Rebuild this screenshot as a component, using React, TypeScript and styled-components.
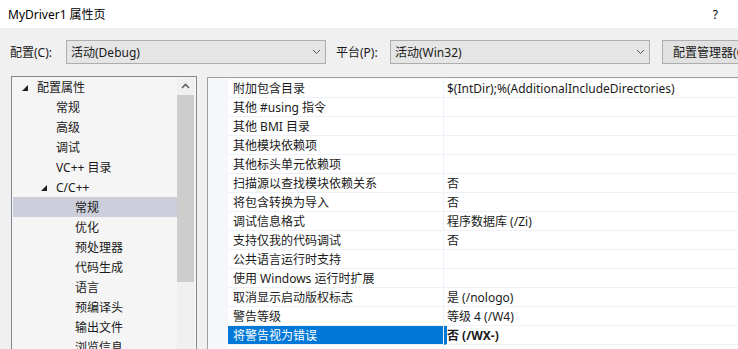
import React from "react";
import styled, { createGlobalStyle } from "styled-components";

const GlobalStyle = createGlobalStyle`
  html, body {
    margin: 0;
    padding: 0;
    overflow: hidden;
    background: #f0f0f0;
  }
  * { box-sizing: border-box; }
`;

const FONT = `"Noto Sans", "Noto Sans CJK SC", sans-serif`;

const Window = styled.div`
  width: 738px;
  height: 349px;
  display: flex;
  flex-direction: column;
  background: #f0f0f0;
  font-family: ${FONT};
  font-size: 12px;
  color: #1a1a1a;
  overflow: hidden;
`;

const TitleBar = styled.div`
  height: 28px;
  flex: none;
  display: flex;
  align-items: center;
  justify-content: space-between;
  background: #ffffff;
  padding: 0 20px 0 8px;
  color: #000;
`;

const Toolbar = styled.div`
  flex: none;
  display: flex;
  align-items: center;
  height: 24px;
  margin-top: 12px;
  padding-left: 10px;
`;

const Label = styled.span<{ width: number }>`
  width: ${p => p.width}px;
  flex: none;
  white-space: nowrap;
`;

const Combo = styled.div`
  width: 260px;
  height: 24px;
  flex: none;
  display: flex;
  align-items: center;
  justify-content: space-between;
  background: #e5e5e5;
  border: 1px solid #adadad;
  padding: 0 4px 0 4px;
  margin-right: 10px;
`;

const Button = styled.div`
  height: 24px;
  flex: none;
  display: flex;
  align-items: center;
  background: #e1e1e1;
  border: 1px solid #adadad;
  padding: 0 10px;
  margin-left: 2px;
  white-space: nowrap;
`;

const Panels = styled.div`
  flex: 1;
  display: flex;
  gap: 10px;
  margin-top: 12px;
  padding-left: 11px;
  min-height: 0;
`;

const TreePanel = styled.div`
  width: 186px;
  flex: none;
  display: flex;
  border: 1px solid #828790;
  border-bottom: none;
  background: #f5f5f5;
  padding: 0 1px 0 1px;
`;

const TreeList = styled.div`
  flex: 1;
`;

const TreeRow = styled.div<{ level: number; selected?: boolean }>`
  height: 20px;
  display: flex;
  align-items: center;
  padding-left: ${p => 24 + p.level * 19}px;
  background: ${p => (p.selected ? "#cccedb" : "transparent")};
  position: relative;
  white-space: nowrap;
`;

const Expander = styled.svg<{ level: number }>`
  position: absolute;
  left: ${p => 9 + p.level * 19}px;
  top: 8px;
`;

const ScrollBar = styled.div`
  width: 17px;
  flex: none;
  display: flex;
  flex-direction: column;
  background: #f0f0f0;
  margin-right: 1px;
`;

const ScrollArrow = styled.div`
  height: 18px;
  display: flex;
  align-items: center;
  justify-content: center;
`;

const ScrollThumb = styled.div`
  height: 187px;
  background: #cdcdcd;
`;

const GridPanel = styled.div`
  flex: 1;
  border: 1px solid #a0a0a0;
  border-right: none;
  border-bottom: none;
  margin-top: 1px;
  background: #f5f7fb;
  padding-top: 1px;
`;

const GridRow = styled.div`
  height: 19px;
  display: grid;
  grid-template-columns: 20px 216px 1fr;
`;

const Margin = styled.div`
  background: #f5f7fb;
`;

const NameCell = styled.div<{ selected?: boolean }>`
  display: flex;
  align-items: center;
  padding-left: 5px;
  white-space: nowrap;
  border-bottom: 1px solid #eef1f7;
  border-right: 1px solid #eef1f7;
  background: ${p => (p.selected ? "#0078d7" : "#ffffff")};
  color: ${p => (p.selected ? "#ffffff" : "#1a1a1a")};
`;

const ValueCell = styled.div<{ selected?: boolean }>`
  display: flex;
  align-items: center;
  padding-left: ${p => (p.selected ? 0 : 3)}px;
  white-space: nowrap;
  background: #ffffff;
  border-bottom: 1px solid #eef1f7;
  border-left: ${p => (p.selected ? "3px solid #0078d7" : "none")};
  font-weight: ${p => (p.selected ? 700 : 400)};
`;

const Chevron = () => (
  <svg width="9" height="6" viewBox="0 0 9 6">
    <polyline points="1,1 4.5,4.5 8,1" fill="none" stroke="#555" strokeWidth="1" />
  </svg>
);

const tree: { text: string; level: number; expanded?: boolean; selected?: boolean }[] = [
  { text: "配置属性", level: 0, expanded: true },
  { text: "常规", level: 1 },
  { text: "高级", level: 1 },
  { text: "调试", level: 1 },
  { text: "VC++ 目录", level: 1 },
  { text: "C/C++", level: 1, expanded: true },
  { text: "常规", level: 2, selected: true },
  { text: "优化", level: 2 },
  { text: "预处理器", level: 2 },
  { text: "代码生成", level: 2 },
  { text: "语言", level: 2 },
  { text: "预编译头", level: 2 },
  { text: "输出文件", level: 2 },
  { text: "浏览信息", level: 2 },
];

const props: [string, string][] = [
  ["附加包含目录", "$(IntDir);%(AdditionalIncludeDirectories)"],
  ["其他 #using 指令", ""],
  ["其他 BMI 目录", ""],
  ["其他模块依赖项", ""],
  ["其他标头单元依赖项", ""],
  ["扫描源以查找模块依赖关系", "否"],
  ["将包含转换为导入", "否"],
  ["调试信息格式", "程序数据库 (/Zi)"],
  ["支持仅我的代码调试", "否"],
  ["公共语言运行时支持", ""],
  ["使用 Windows 运行时扩展", ""],
  ["取消显示启动版权标志", "是 (/nologo)"],
  ["警告等级", "等级 4 (/W4)"],
  ["将警告视为错误", "否 (/WX-)"],
  ["", ""],
];

export default function App() {
  return (
    <Window>
      <GlobalStyle />
      <TitleBar>
        <span>MyDriver1 属性页</span>
        <span>?</span>
      </TitleBar>
      <Toolbar>
        <Label width={56}>配置(C):</Label>
        <Combo>
          <span>活动(Debug)</span>
          <Chevron />
        </Combo>
        <Label width={54}>平台(P):</Label>
        <Combo>
          <span>活动(Win32)</span>
          <Chevron />
        </Combo>
        <Button>配置管理器(O)...</Button>
      </Toolbar>
      <Panels>
        <TreePanel>
          <TreeList>
            {tree.map((t, i) => (
              <TreeRow key={i} level={t.level} selected={t.selected}>
                {t.expanded && (
                  <Expander level={t.level} width="6" height="6" viewBox="0 0 6 6">
                    <polygon points="6,0 6,6 0,6" fill="#1e1e1e" />
                  </Expander>
                )}
                {t.text}
              </TreeRow>
            ))}
          </TreeList>
          <ScrollBar>
            <ScrollArrow>
              <svg width="9" height="6" viewBox="0 0 9 6">
                <polyline points="1,5 4.5,1.5 8,5" fill="none" stroke="#606060" strokeWidth="1.6" />
              </svg>
            </ScrollArrow>
            <ScrollThumb />
          </ScrollBar>
        </TreePanel>
        <GridPanel>
          {props.map(([name, value], i) => {
            const selected = i === 13;
            return (
              <GridRow key={i}>
                <Margin />
                <NameCell selected={selected}>{name}</NameCell>
                <ValueCell selected={selected}>{value}</ValueCell>
              </GridRow>
            );
          })}
        </GridPanel>
      </Panels>
    </Window>
  );
}
